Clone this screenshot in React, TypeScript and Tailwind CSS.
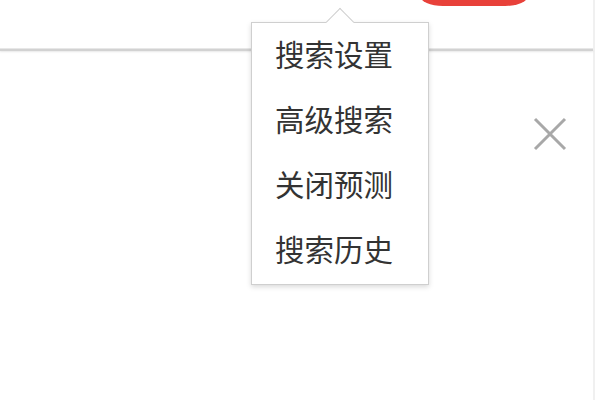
const items = ['搜索设置', '高级搜索', '关闭预测', '搜索历史'];

export default function App() {
  return (
    <div
      className="relative h-[400px] w-[600px] overflow-hidden bg-white"
      style={{ fontFamily: '"Noto Sans CJK SC", "Noto Sans", sans-serif' }}
    >
      {/* cut-off search button at the top */}
      <div className="absolute left-[420px] top-[-40px] h-[46px] w-[108px] rounded-[23px/10px] bg-[#e8413a] blur-[0.6px]" />

      <div className="flex h-full w-[595px] flex-col border-r-2 border-[#f0f0f0]">
        <div className="h-[48px] shrink-0" />
        <div className="h-[1px] bg-[#e8e8e8]" />
        <div className="h-[2px] bg-[#d2d2d2] shadow-[0_1px_2px_rgba(0,0,0,0.1)]" />
        <div className="flex justify-end pr-[26px] pt-[66px]">
          <svg width="34" height="34" viewBox="0 0 34 34" className="text-[#a8a8a8]">
            <path d="M2 2 L32 32 M32 2 L2 32" stroke="currentColor" strokeWidth="3" />
          </svg>
        </div>
      </div>

      {/* dropdown menu */}
      <div className="absolute left-[251px] top-[22px] w-[178px] border border-[#cfcfcf] bg-white shadow-[0_2px_5px_rgba(0,0,0,0.15)]">
        <div className="absolute left-[78px] top-[-11px] h-[20px] w-[20px] rotate-45 border-l border-t border-[#cfcfcf] bg-white" />
        <ul className="relative flex flex-col pb-[1px]">
          {items.map((item) => (
            <li
              key={item}
              className="flex h-[65px] items-center pb-[3px] pl-[23px] text-[29.5px] leading-none text-[#333]"
            >
              {item}
            </li>
          ))}
        </ul>
      </div>
    </div>
  );
}
